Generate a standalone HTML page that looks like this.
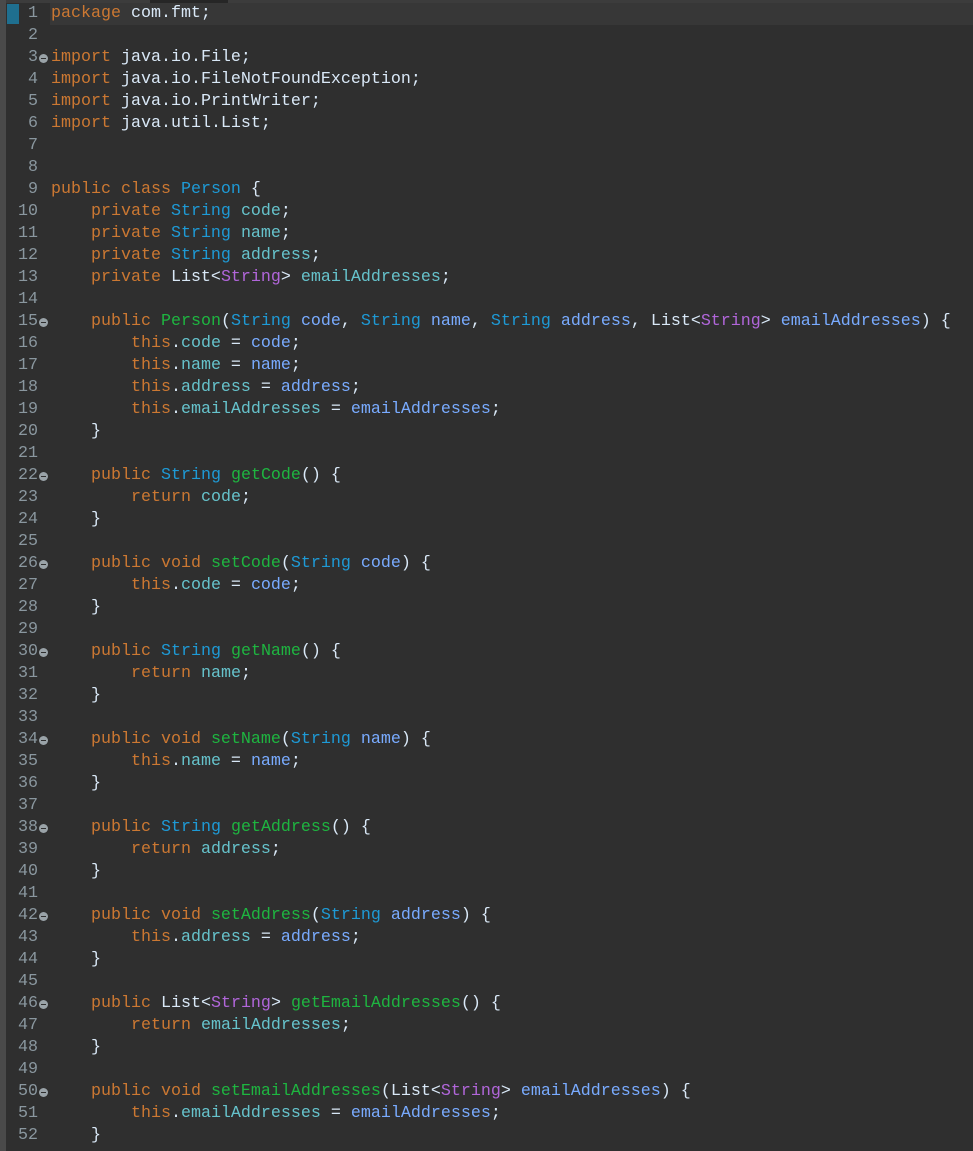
<!DOCTYPE html><html style="overflow:hidden;height:1151px"><head><style>
body{margin:0;width:973px;height:1151px;background:#2f2f2f;overflow:hidden;position:relative;font-family:"Liberation Mono",monospace;font-size:16.67px;}
.top{position:absolute;left:0;top:0;width:973px;height:3px;background:#3c3c3c}
.top2{position:absolute;left:150px;top:0;width:78px;height:3px;background:#262626}
.bar{position:absolute;left:0;top:0;width:6px;height:1151px;background:#4a4a4a}
.hl{position:absolute;left:50px;top:3px;width:923px;height:22px;background:#373737}
.mk{position:absolute;left:7px;top:4px;width:12px;height:20px;background:#1f6f8f}
.r{position:absolute;left:0;height:22px;line-height:22px;white-space:pre;width:973px}
.n{position:absolute;right:935px;color:#8a979f}
.c{position:absolute;left:51px;color:#d9e8f7}
.f{position:absolute;left:39px;top:7px;width:9px;height:9px;border-radius:50%;background:#9aa3a8}
.f:after{content:"";position:absolute;left:2px;top:4px;width:5px;height:1px;background:#2f2f2f}
.k{color:#cc7832}.t{color:#1e9ad6}.m{color:#1eb540}.p{color:#79abff}.v{color:#66c3cc}.g{color:#b166da}
</style></head><body>
<div class="top"></div><div class="top2"></div><div class="bar"></div><div class="hl"></div><div class="mk"></div>
<div id="L"></div>
<script>
var L=[
'<span class="k">package</span> com.fmt;','',
'<span class="k">import</span> java.io.File;','<span class="k">import</span> java.io.FileNotFoundException;','<span class="k">import</span> java.io.PrintWriter;','<span class="k">import</span> java.util.List;','','',
'<span class="k">public class</span> <span class="t">Person</span> {',
'    <span class="k">private</span> <span class="t">String</span> <span class="v">code</span>;',
'    <span class="k">private</span> <span class="t">String</span> <span class="v">name</span>;',
'    <span class="k">private</span> <span class="t">String</span> <span class="v">address</span>;',
'    <span class="k">private</span> List&lt;<span class="g">String</span>&gt; <span class="v">emailAddresses</span>;','',
'    <span class="k">public</span> <span class="m">Person</span>(<span class="t">String</span> <span class="p">code</span>, <span class="t">String</span> <span class="p">name</span>, <span class="t">String</span> <span class="p">address</span>, List&lt;<span class="g">String</span>&gt; <span class="p">emailAddresses</span>) {',
'        <span class="k">this</span>.<span class="v">code</span> = <span class="p">code</span>;',
'        <span class="k">this</span>.<span class="v">name</span> = <span class="p">name</span>;',
'        <span class="k">this</span>.<span class="v">address</span> = <span class="p">address</span>;',
'        <span class="k">this</span>.<span class="v">emailAddresses</span> = <span class="p">emailAddresses</span>;',
'    }',''];
function gs(T,ty,nm,f){L.push('    <span class="k">public</span> '+ty+' <span class="m">get'+nm+'</span>() {','        <span class="k">return</span> <span class="v">'+f+'</span>;','    }','');}
function ss(T,ty,nm,f){L.push('    <span class="k">public void</span> <span class="m">set'+nm+'</span>('+ty+' <span class="p">'+f+'</span>) {','        <span class="k">this</span>.<span class="v">'+f+'</span> = <span class="p">'+f+'</span>;','    }','');}
var S='<span class="t">String</span>',LS='List&lt;<span class="g">String</span>&gt;';
gs(0,S,'Code','code');ss(0,S,'Code','code');gs(0,S,'Name','name');ss(0,S,'Name','name');
gs(0,S,'Address','address');ss(0,S,'Address','address');gs(0,LS,'EmailAddresses','emailAddresses');ss(0,LS,'EmailAddresses','emailAddresses');
var folds=[3,15,22,26,30,34,38,42,46,50];
var h='';
for(var i=0;i<52;i++){var y=3+i*22;
h+='<div class="r" style="top:'+y+'px"><span class="n">'+(i+1)+'</span>'+(folds.indexOf(i+1)>=0?'<span class="f"></span>':'')+'<span class="c">'+(L[i]||'')+'</span></div>';}
document.getElementById('L').innerHTML=h;
</script>
</body></html>
